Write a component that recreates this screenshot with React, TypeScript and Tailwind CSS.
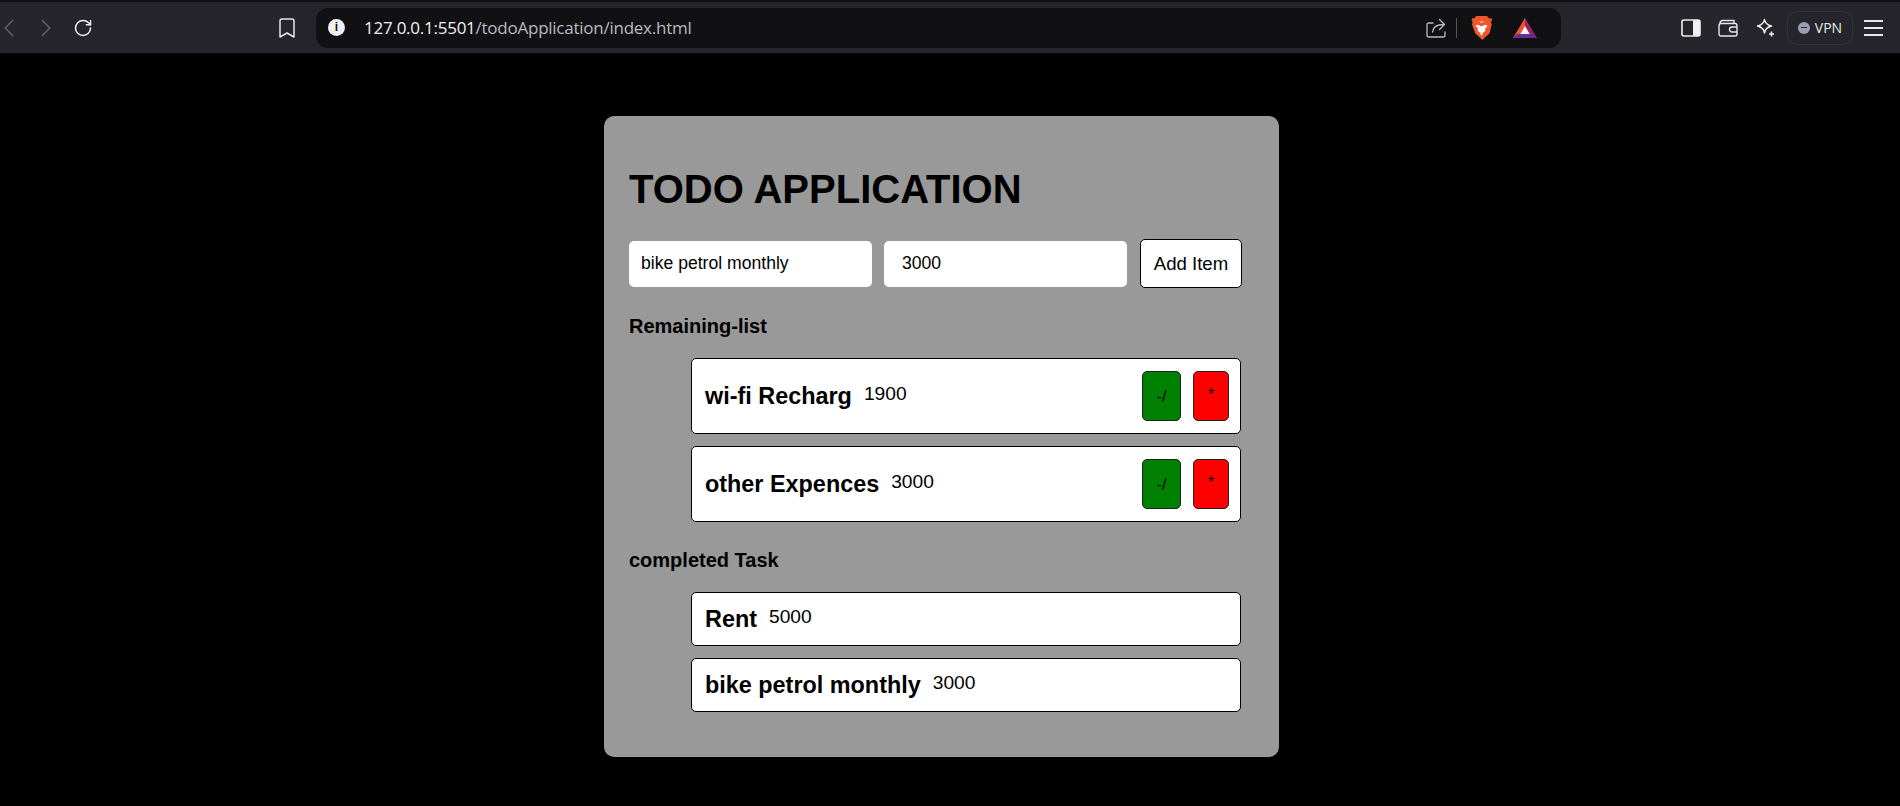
import React from 'react';
import { RotateCw, Bookmark } from 'lucide-react';

interface Item {
  id: number;
  name: string;
  amount: string;
}

const remaining: Item[] = [
  { id: 1, name: 'wi-fi Recharg', amount: '1900' },
  { id: 2, name: 'other Expences', amount: '3000' },
];

const completed: Item[] = [
  { id: 3, name: 'Rent', amount: '5000' },
  { id: 4, name: 'bike petrol monthly', amount: '3000' },
];

const BraveLogo = () => (
  <svg width="21" height="24" viewBox="0 0 21 24">
    <path d="M5 0h11l2 2.4 2.4-.4.6 2-1 2 .7 2.5-2.2 9-4.2 3.6-3 2.9-3-2.9-4-3.6L1 8.500 1.600 6 .6 4l.8-2 2 .4z" fill="#f1562b" />
    <path d="M10.500 10.500 7 8.800 4.500 9.500l2.700 3.800-.7 1.500 4 3 4-3-.7-1.500 2.700-3.800-2.500-.7z" fill="#fff" />
    <path d="M8.500 17.500h4l-2 2z" fill="#fff" />
    <path d="M7.500 5.500h6l-3 1.500z" fill="#ffd3c2" />
  </svg>
);

const BatLogo = () => (
  <svg width="24" height="20" viewBox="0 0 24 20">
    <path d="M12 0 0 20h8l4-6.500z" fill="#f1502f" />
    <path d="M12 0 24 20h-7l-5-6.500z" fill="#9e1f63" />
    <path d="M0 20h24l-4-4H4z" fill="#662d91" />
    <path d="m12 8 4.600 8H7.400z" fill="#fff" />
  </svg>
);

const Sidebar = () => (
  <svg width="20" height="18" viewBox="0 0 20 18">
    <rect x="1" y="1" width="18" height="16" rx="2" fill="none" stroke="#f0f0f2" strokeWidth="1.6" />
    <rect x="12" y="1" width="7" height="16" rx="1" fill="#f0f0f2" />
  </svg>
);

const Wallet = () => (
  <svg width="20" height="18" viewBox="0 0 20 18" fill="none" stroke="#e8e8ec" strokeWidth="1.4">
    <path d="M2 4.500C2 2.500 3 1.500 5 1.500h11v3" />
    <rect x="1" y="4.500" width="18" height="12.500" rx="2" />
    <path d="M19 8h-5a2.500 2.500 0 0 0 0 5h5" />
  </svg>
);

const Leo = () => (
  <svg width="20" height="20" viewBox="0 0 20 20" fill="none" stroke="#f0f0f2" strokeWidth="1.5" strokeLinejoin="round">
    <path d="M8.500 1.500c.6 3.600 2.600 5.600 7 6.500-4.400 1-6.400 3-7 7-.6-4-2.600-6-7-7 4.400-.9 6.400-2.900 7-6.500z" />
    <path d="M15.500 13.500v5M13 16h5" strokeWidth="1.6" />
  </svg>
);

const Share = () => (
  <svg width="20" height="20" viewBox="0 0 20 20" fill="none" stroke="#b9bac0" strokeWidth="1.3" strokeLinecap="round" strokeLinejoin="round">
    <path d="M7 5H2.500A1.500 1.500 0 0 0 1 6.500v11A1.500 1.500 0 0 0 2.500 19h15a1.500 1.500 0 0 0 1.500-1.500V14" />
    <path d="M6.500 14c.5-5 4-7.500 11-7.500M13.500 1.500l5 5-5 5" />
  </svg>
);

// lucide's chevrons are too short for these, the browser draws them tall and thin
const NavLeft = () => (
  <svg width="10" height="18" viewBox="0 0 10 18" fill="none" stroke="#66676d" strokeWidth="1.3">
    <path d="M9 1 1.200 9 9 17" />
  </svg>
);

const NavRight = () => (
  <svg width="10" height="18" viewBox="0 0 10 18" fill="none" stroke="#66676d" strokeWidth="1.3">
    <path d="m1 1 7.800 8L1 17" />
  </svg>
);

const Row = ({ item, actions }: { item: Item; actions?: boolean }) => (
  <div
    className={`ml-[62px] w-[550px] flex items-center pl-[13px] pr-[11px] bg-white border border-black rounded-[5px] ${
      actions ? 'h-[76px]' : 'h-[54px]'
    }`}
  >
    <h3 className="text-[23.4px] leading-[26px] font-bold text-black">{item.name}</h3>
    <p className="ml-[12px] mb-[5px] text-[19.2px] leading-[22px] text-black">{item.amount}</p>
    {actions && (
      <div className="ml-auto flex items-center gap-[12px]">
        <button className="w-[39px] h-[50px] pt-[1px] bg-[#008000] border border-[#222] rounded-[5px] text-[16px] text-black">
          -/
        </button>
        <button className="w-[36px] h-[50px] pb-[3px] bg-[#ff0000] border border-[#222] rounded-[5px] text-[16px] text-black">
          *
        </button>
      </div>
    )}
  </div>
);

export default function App() {
  return (
    <div className="h-screen overflow-hidden bg-black font-['Liberation_Sans',Arial,sans-serif]">
      {/* browser chrome */}
      <div className="h-[53px] bg-[#25252b] border-t-2 border-[#0f0f12] flex items-center relative">
        <span className="ml-[4px] flex"><NavLeft /></span>
        <span className="ml-[27px] flex"><NavRight /></span>
        <RotateCw className="ml-[22px] w-[20px] h-[20px] text-[#f0f0f2]" strokeWidth={1.8} />
        <Bookmark className="ml-[182px] w-[24px] h-[24px] text-[#e8e8ec]" strokeWidth={1.5} />
        <div className="ml-[17px] w-[1245px] h-[40px] rounded-[12px] bg-[#111114] flex items-center">
          <span className="ml-[12px] w-[17px] h-[17px] rounded-full bg-[#f0f0f2] text-[#111114] text-[12px] leading-[17px] font-bold text-center">
            i
          </span>
          <span className="ml-[19px] text-[17px] text-[#b9bac0] font-['Open_Sans',sans-serif] tracking-[-0.25px]">
            <span className="text-[#f0f0f2]">127.0.0.1:5501</span>/todoApplication/index.html
          </span>
          <div className="ml-auto flex items-center">
            <Share />
            <span className="ml-[10px] w-[1px] h-[20px] bg-[#55565c]" />
            <span className="ml-[14px] flex"><BraveLogo /></span>
            <span className="ml-[21px] mr-[24px] flex"><BatLogo /></span>
          </div>
        </div>
        <span className="ml-[120px] flex"><Sidebar /></span>
        <span className="ml-[17px] flex"><Wallet /></span>
        <span className="ml-[18px] flex"><Leo /></span>
        <div className="ml-[11px] w-[66px] h-[34px] rounded-[10px] border border-[#33343a] flex items-center justify-center gap-[5px]">
          <span className="w-[12px] h-[12px] rounded-full bg-[#9a9db3] flex items-center justify-center">
            <span className="w-[6px] h-[1.5px] bg-[#25252b]" />
          </span>
          <span className="text-[14px] text-[#e8e8ec] font-['Open_Sans',sans-serif]">VPN</span>
        </div>
        <div className="ml-[11px] w-[19px] flex flex-col gap-[5px]">
          <span className="h-[2px] bg-[#e8e8ec]" />
          <span className="h-[2px] bg-[#e8e8ec]" />
          <span className="h-[2px] bg-[#e8e8ec]" />
        </div>
      </div>

      {/* todo card */}
      <div className="mt-[63px] ml-[604px] w-[675px] h-[641px] bg-[#999999] rounded-[10px] pl-[25px] pt-[50px]">
        <h1 className="text-[40px] leading-[46px] font-bold text-black">TODO APPLICATION</h1>
        <div className="mt-[27px] flex items-center h-[49px]">
          <input
            readOnly
            value="bike petrol monthly"
            className="w-[243px] h-[46px] bg-white rounded-[5px] pl-[12px] text-[17.6px] text-black outline-none"
          />
          <input
            readOnly
            value="3000"
            className="ml-[12px] w-[243px] h-[46px] bg-white rounded-[5px] pl-[18px] text-[17.6px] text-black outline-none"
          />
          <button className="ml-[13px] w-[102px] h-[49px] bg-white border border-black rounded-[5px] text-[18.6px] text-black">
            Add Item
          </button>
        </div>
        <h2 className="mt-[27px] text-[20px] leading-[23px] font-bold text-black">Remaining-list</h2>
        <div className="mt-[20px] flex flex-col gap-[12px]">
          {remaining.map((item) => (
            <Row key={item.id} item={item} actions />
          ))}
        </div>
        <h2 className="mt-[27px] text-[20px] leading-[23px] font-bold text-black">completed Task</h2>
        <div className="mt-[20px] flex flex-col gap-[12px]">
          {completed.map((item) => (
            <Row key={item.id} item={item} />
          ))}
        </div>
      </div>
    </div>
  );
}
